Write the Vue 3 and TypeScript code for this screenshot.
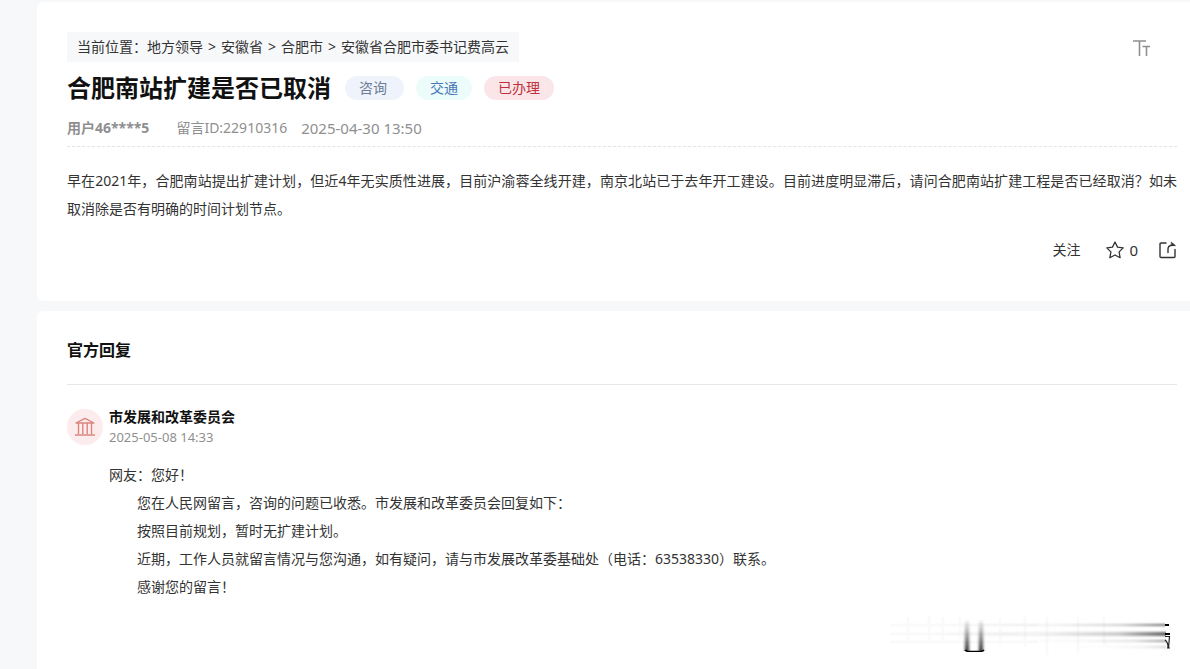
<script setup lang="ts">
interface Tag {
  text: string
  kind: 'ask' | 'topic' | 'done'
}

const crumbs: string[] = ['地方领导', '安徽省', '合肥市', '安徽省合肥市委书记费高云']

const tags: Tag[] = [
  { text: '咨询', kind: 'ask' },
  { text: '交通', kind: 'topic' },
  { text: '已办理', kind: 'done' },
]

const replyLines: string[] = [
  '您在人民网留言，咨询的问题已收悉。市发展和改革委员会回复如下：',
  '按照目前规划，暂时无扩建计划。',
  '近期，工作人员就留言情况与您沟通，如有疑问，请与市发展改革委基础处（电话：63538330）联系。',
  '感谢您的留言！',
]
</script>

<template>
  <main class="page">
    <article class="card">
      <div class="top">
        <nav class="crumbs" aria-label="当前位置">
          <span>当前位置：</span>
          <template v-for="(c, i) in crumbs" :key="c">
            <span v-if="i > 0" class="sep">&gt;</span>
            <a href="#">{{ c }}</a>
          </template>
        </nav>
        <button class="icon-btn size-btn" type="button" aria-label="字号">
          <svg width="18" height="18" viewBox="0 0 18 18" fill="none" stroke="#8f8f8f" stroke-width="1.6">
            <path d="M0 3H13M9.500 8.500H17" />
            <path d="M6.5 3V18M13.5 8.500V18" />
          </svg>
        </button>
      </div>

      <div class="title-row">
        <h1>合肥南站扩建是否已取消</h1>
        <span v-for="t in tags" :key="t.text" class="tag" :class="t.kind">{{ t.text }}</span>
      </div>

      <div class="meta">
        <b>用户46****5</b>
        <span class="msg-id">留言ID:22910316</span>
        <time>2025-04-30 13:50</time>
      </div>

      <p class="body">早在2021年，合肥南站提出扩建计划，但近4年无实质性进展，目前沪渝蓉全线开建，南京北站已于去年开工建设。目前进度明显滞后，请问合肥南站扩建工程是否已经取消？如未取消除是否有明确的时间计划节点。</p>

      <div class="actions">
        <button class="icon-btn" type="button">关注</button>
        <button class="icon-btn star" type="button" aria-label="收藏 0">
          <svg width="18" height="18" viewBox="0 0 18 18" fill="none" stroke="#333" stroke-width="1.3" stroke-linejoin="round">
            <path d="M9 1L11.5 6.1L17.2 6.9L13.1 10.9L14.1 16.7L9 14L3.9 16.7L4.9 10.9L.8 6.9L6.5 6.1Z" />
          </svg>
          <span class="count">0</span>
        </button>
        <button class="icon-btn" type="button" aria-label="分享">
          <svg width="18" height="18" viewBox="0 0 18 18" fill="none" stroke="#333" stroke-width="1.4" stroke-linecap="round" stroke-linejoin="round">
            <path d="M7 2H2Q1 2 1 3V15.5Q1 16.5 2 16.5H15Q16 16.5 16 15.5V8.5" />
            <path d="M9 11.5V8Q9 4.5 13 4.2H14.5" />
            <path d="M12.6 1.4L16.4 4.6H12.6Z" fill="#333" stroke-width=".8" />
          </svg>
        </button>
      </div>
    </article>

    <section class="card reply-card">
      <h2>官方回复</h2>
      <div class="reply">
        <div class="avatar">
          <svg width="20" height="20" viewBox="0 0 20 20" fill="none" stroke="#d9867f" stroke-width="1.4" stroke-linejoin="round">
            <path d="M1 6L10 1.4L19 6Z" />
            <path d="M3.5 6V17M7.8 6V17M12.2 6V17M16.5 6V17M0 18H20" />
          </svg>
        </div>
        <div class="reply-main">
          <h3>市发展和改革委员会</h3>
          <time>2025-05-08 14:33</time>
          <div class="reply-text">
            <p>网友：您好！</p>
            <p v-for="line in replyLines" :key="line" class="indent">{{ line }}</p>
          </div>
        </div>
      </div>

      <div class="mark">
        <svg width="284" height="42" viewBox="0 0 284 42" aria-hidden="true">
          <defs>
            <linearGradient id="streak" x1="0" x2="1" y1="0" y2="0">
              <stop offset="0" stop-color="#000" stop-opacity="0" />
              <stop offset=".5" stop-color="#000" stop-opacity=".06" />
              <stop offset=".8" stop-color="#000" stop-opacity=".2" />
              <stop offset="1" stop-color="#000" stop-opacity=".6" />
            </linearGradient>
            <linearGradient id="drop" x1="0" x2="0" y1="0" y2="1">
              <stop offset="0" stop-color="#000" stop-opacity="0" />
              <stop offset=".5" stop-color="#000" stop-opacity=".4" />
              <stop offset="1" stop-color="#000" stop-opacity=".85" />
            </linearGradient>
            <filter id="soft" x="-50%" y="-10%" width="200%" height="120%">
              <feGaussianBlur stdDeviation="1.4 0" />
            </filter>
            <filter id="thin" x="0" y="-100%" width="100%" height="300%">
              <feGaussianBlur stdDeviation="0 1" />
            </filter>
          </defs>
          <path d="M2 10H150M2 19H130M2 27H150M20 2V28M41 1V26M55 2V27M72 2V24M112 3V30M137 1V32M159 2V40M190 2V38M216 2V30" stroke="#000" stroke-opacity=".02" stroke-width="3" />
          <g fill="url(#drop)" filter="url(#soft)">
            <rect x="77" y="4" width="4" height="32" />
            <rect x="91" y="4" width="4" height="32" />
          </g>
          <path d="M77 35Q78 36.3 80 36.3H93Q95 36.3 96 35" fill="none" stroke="#000" stroke-width="1.3" />
          <g fill="url(#streak)" filter="url(#thin)">
            <rect x="60" y="9" width="217" height="2" />
            <rect x="40" y="17" width="238" height="4" />
            <rect x="120" y="25" width="158" height="2" opacity=".7" />
            <rect x="160" y="31" width="118" height="2" opacity=".3" />
          </g>
          <path d="M277 10H281M277 19H282" stroke="#000" stroke-width="2" />
          <path d="M277 21.500H281.500L280.500 33M277 25Q280 27 280 32.500M279 33H282" fill="none" stroke="#222" stroke-width="1.2" />
        </svg>
      </div>
    </section>
  </main>
</template>

<style>
body {
  margin: 0;
  background: #f7f8fa;
}
</style>

<style scoped>
.page {
  box-sizing: border-box;
  min-height: 100vh;
  padding: 2px 0 0 37px;
  display: flex;
  flex-direction: column;
  gap: 10px;
  color: #333;
  font-family: "Noto Sans", "Noto Sans CJK SC", sans-serif;
  font-size: 14px;
  line-height: 28px;
  text-spacing-trim: space-all;
}
h1, h2, h3, p {
  margin: 0;
}
.card {
  background: #fff;
  border-radius: 6px 0 0 6px;
  padding: 30px 13px 37px 30px;
}
.top {
  display: flex;
  justify-content: space-between;
  align-items: center;
}
.crumbs {
  display: flex;
  flex-wrap: wrap;
  padding: 0 10px;
  background: #f7f8fa;
  line-height: 30px;
}
.crumbs a {
  color: inherit;
  text-decoration: none;
}
.sep {
  padding: 0 5px;
}
.icon-btn {
  display: flex;
  align-items: center;
  padding: 0;
  border: 0;
  background: none;
  color: inherit;
  font: inherit;
  cursor: pointer;
}
.size-btn {
  margin-right: 26px;
}
.title-row {
  display: flex;
  align-items: center;
  gap: 12px;
  padding: 8px 0;
}
h1 {
  margin-right: 2px;
  color: #111;
  font-size: 24px;
  line-height: 36px;
}
.tag {
  padding: 0 14px;
  border-radius: 12px;
  line-height: 24px;
}
.ask {
  padding-right: 17px;
  background: #eff3fb;
  color: #6b7c98;
}
.topic {
  background: #ebfcfa;
  color: #4a76b8;
}
.done {
  background: #fae6e8;
  color: #c0303c;
}
.meta {
  display: flex;
  align-items: center;
  padding-bottom: 4px;
  border-bottom: 1px dashed #e4e4e4;
  color: #8f8f8f;
}
.msg-id {
  margin: 0 14px 0 27px;
}
.meta time {
  font-size: 15px;
}
.body {
  padding-top: 20px;
  text-align: justify;
}
.actions {
  display: flex;
  justify-content: flex-end;
  align-items: center;
  padding-top: 13px;
}
.star {
  gap: 5px;
  margin: 0 21px 0 26px;
}
.count {
  font-size: 15px;
}
.reply-card {
  flex: 1;
  padding-top: 27px;
  padding-bottom: 12px;
  border-radius: 6px 0 0 0;
}
.reply-card h2 {
  padding-bottom: 22px;
  border-bottom: 1px solid #e6e6e6;
  color: #111;
  font-size: 16px;
  line-height: 24px;
}
.reply {
  display: flex;
  gap: 6px;
  padding-top: 24px;
}
.avatar {
  flex: none;
  display: flex;
  align-items: center;
  justify-content: center;
  width: 36px;
  height: 36px;
  border-radius: 50%;
  background: #fdeced;
}
.reply-main {
  flex: 1;
}
.reply-main h3 {
  color: #111;
  font-size: 14px;
  line-height: 16px;
}
.reply-main time {
  display: block;
  color: #8f8f8f;
  font-size: 13px;
  line-height: 24px;
}
.reply-text {
  padding-top: 12px;
}
.indent {
  text-indent: 28px;
}
.mark {
  display: flex;
  justify-content: flex-end;
  padding: 14px 5px 0 0;
}
</style>
